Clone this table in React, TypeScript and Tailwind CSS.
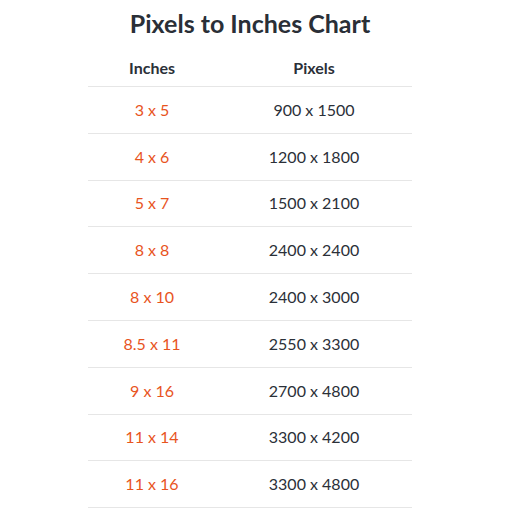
const ROWS = [
  ['3 x 5', '900 x 1500'],
  ['4 x 6', '1200 x 1800'],
  ['5 x 7', '1500 x 2100'],
  ['8 x 8', '2400 x 2400'],
  ['8 x 10', '2400 x 3000'],
  ['8.5 x 11', '2550 x 3300'],
  ['9 x 16', '2700 x 4800'],
  ['11 x 14', '3300 x 4200'],
  ['11 x 16', '3300 x 4800'],
];

export default function App() {
  return (
    <div className="w-[520px] h-[520px] bg-white font-['Lato',sans-serif] text-[#2b3038] overflow-hidden">
      <div className="ml-[88px] w-[324px]">
        <h1 className="text-center text-[25px] font-bold leading-none pt-[11px] text-[#2a2f37] whitespace-nowrap">
          Pixels to Inches Chart
        </h1>
        <div className="mt-[14px]">
          <div className="flex h-[37px] items-center border-b border-[#e6e6e6] text-[16px] font-bold">
            <div className="w-[128px] text-center">Inches</div>
            <div className="flex-1 text-center">Pixels</div>
          </div>
          {ROWS.map(([inches, pixels]) => (
            <div key={inches} className="flex h-[46.8px] items-center border-b border-[#e6e6e6] text-[16px]">
              <div className="w-[128px] text-center text-[#e8541e]">{inches}</div>
              <div className="flex-1 text-center">{pixels}</div>
            </div>
          ))}
        </div>
      </div>
    </div>
  );
}
